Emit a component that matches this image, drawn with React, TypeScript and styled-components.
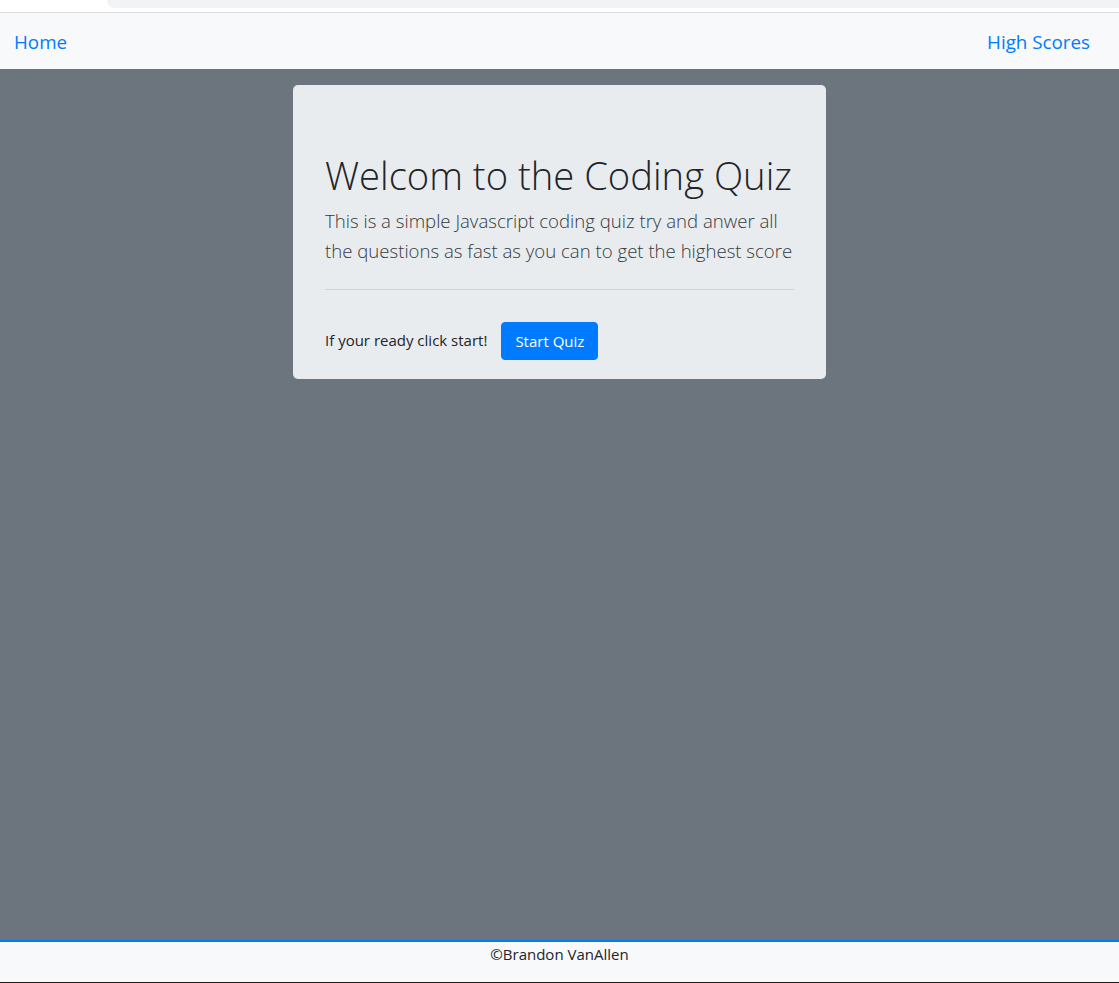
import React from "react";
import styled, { createGlobalStyle } from "styled-components";

const Global = createGlobalStyle`
  html, body { margin: 0; padding: 0; }
  body {
    font-family: "Open Sans", "Noto Sans", "Liberation Sans", sans-serif;
    color: #212529;
    background: #ffffff;
  }
`;

const Page = styled.div`
  display: flex;
  flex-direction: column;
  height: 983px;
  overflow: hidden;
`;

const Chrome = styled.div`
  height: 12px;
  background: #ffffff;
  border-bottom: 1px solid #dadce0;
  display: flex;
  padding-left: 107px;
  box-sizing: content-box;
`;

const AddressBar = styled.div`
  flex: 1;
  height: 8px;
  background: #f1f3f4;
  border-bottom-left-radius: 12px;
`;

const NavBar = styled.nav`
  height: 56px;
  background: #f8f9fa;
  display: flex;
  align-items: center;
  justify-content: space-between;
  padding: 0 29px 0 14px;
`;

const NavLink = styled.a`
  font-size: 18.8px;
  color: #007bff;
  text-decoration: none;
  line-height: 1;
  padding-top: 2px;
`;

const Main = styled.main`
  flex: 1;
  background: #6c757d;
  display: flex;
  justify-content: center;
  align-items: flex-start;
  padding-top: 16px;
`;

const Jumbotron = styled.section`
  width: 533px;
  box-sizing: border-box;
  background: #e9ecef;
  border-radius: 5px;
  padding: 66px 32px 19px;
`;

const Title = styled.h1`
  margin: 0 0 7px;
  font-size: 38.2px;
  font-weight: 300;
  line-height: 48px;
  color: #212529;
  white-space: nowrap;
`;

const Lead = styled.p`
  margin: 0;
  font-size: 18.6px;
  font-weight: 300;
  line-height: 30px;
  color: #343a40;
`;

const Rule = styled.hr`
  margin: 23px 0 32px;
  border: 0;
  border-top: 1px solid rgba(0, 0, 0, 0.1);
`;

const ActionRow = styled.div`
  display: flex;
  align-items: center;
  gap: 14px;
`;

const Prompt = styled.span`
  font-size: 15px;
  color: #212529;
  padding-bottom: 2px;
`;

const Button = styled.button`
  font-family: inherit;
  font-size: 15px;
  color: #ffffff;
  background: #007bff;
  border: 1px solid #007bff;
  border-radius: 4px;
  height: 38px;
  padding: 0 13px;
  cursor: pointer;
`;

const Footer = styled.footer`
  height: 38px;
  background: #f8f9fa;
  border-top: 2px solid #007bff;
  border-bottom: 1px solid #1a1a1a;
  display: flex;
  justify-content: center;
  align-items: flex-start;
  padding-top: 2px;
  box-sizing: content-box;
  font-size: 15px;
  color: #212529;
`;

export default function App() {
  return (
    <>
      <Global />
      <Page>
        <Chrome>
          <AddressBar />
        </Chrome>
        <NavBar>
          <NavLink href="#">Home</NavLink>
          <NavLink href="#">High Scores</NavLink>
        </NavBar>
        <Main>
          <Jumbotron>
            <Title>Welcom to the Coding Quiz</Title>
            <Lead>
              This is a simple Javascript coding quiz try and anwer all the
              questions as fast as you can to get the highest score
            </Lead>
            <Rule />
            <ActionRow>
              <Prompt>If your ready click start!</Prompt>
              <Button>Start Quiz</Button>
            </ActionRow>
          </Jumbotron>
        </Main>
        <Footer>©Brandon VanAllen</Footer>
      </Page>
    </>
  );
}
